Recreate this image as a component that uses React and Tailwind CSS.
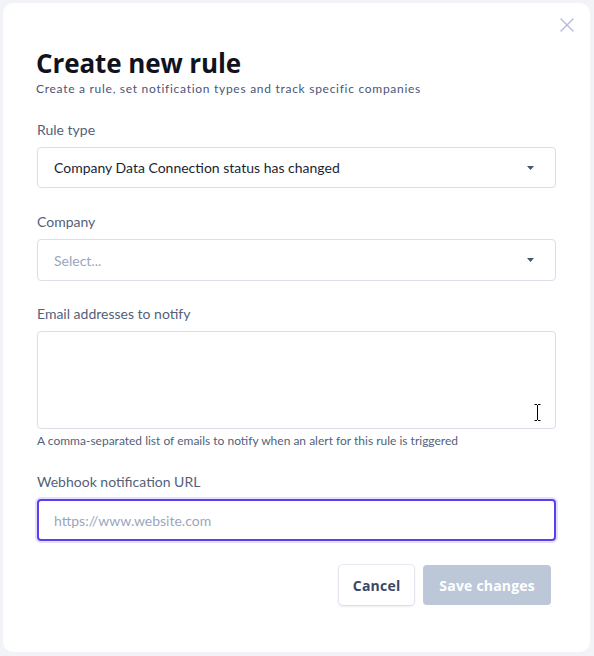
import { X } from 'lucide-react'

function Caret() {
  return (
    <svg width="7" height="4" viewBox="0 0 7 4" className="flex-shrink-0">
      <path d="M0 0h7L3.5 4z" fill="#4a5470" />
    </svg>
  )
}

function Label({ children }) {
  return <p className="text-[14px] leading-5 text-[#545f7a]">{children}</p>
}

const heading = { fontFamily: '"Open Sans", "Noto Sans", sans-serif' }

export default function App() {
  return (
    <div className="min-h-screen bg-[#f2f3f7] pt-[3px] pl-[3px]" style={{ fontFamily: 'Lato, "Noto Sans", sans-serif' }}>
      <div className="relative w-[587px] h-[649px] rounded-[10px] bg-white pl-[34px] pr-[34px] pt-[44px]">
        <button className="absolute top-[10px] right-[11px] text-[#b5bad9]">
          <X size={24} strokeWidth={1.4} />
        </button>

        <h1 className="text-[26px] leading-8 font-bold text-[#101220] tracking-[-0.1px] -ml-[1px]" style={heading}>Create new rule</h1>
        <p className="text-[12px] leading-4 text-[#4a5578] mt-[2px] tracking-[0.72px] -ml-[1px]">
          Create a rule, set notification types and track specific companies
        </p>

        <div className="mt-[23px] flex flex-col gap-[7px]">
          <Label>Rule type</Label>
          <div className="h-[41px] rounded-[4px] border border-[#d9dee8] flex items-center justify-between pl-[16px] pr-[21px]">
            <span className="text-[14px] text-[#1b1f33]">Company Data Connection status has changed</span>
            <Caret />
          </div>
        </div>

        <div className="mt-[24px] flex flex-col gap-[7px]">
          <Label>Company</Label>
          <div className="h-[42px] rounded-[4px] border border-[#d9dee8] flex items-center justify-between pl-[16px] pr-[21px]">
            <span className="text-[14px] text-[#9ba6bd]">Select...</span>
            <Caret />
          </div>
        </div>

        <div className="mt-[23px] flex flex-col gap-[7px]">
          <Label>Email addresses to notify</Label>
          <div className="relative h-[98px] rounded-[4px] border border-[#d9dee8]">
            <svg width="7" height="17" viewBox="0 0 7 17" className="absolute right-[14px] bottom-[7px]">
              <path d="M0.5 0.5h2.5M4 0.5h2.5M3.5 1v15M0.5 16.5h2.5M4 16.5h2.5" stroke="#000" strokeWidth="1" fill="none" />
            </svg>
          </div>
          <p className="-mt-[3px] text-[12px] leading-4 text-[#545f7a]">
            A comma-separated list of emails to notify when an alert for this rule is triggered
          </p>
        </div>

        <div className="mt-[23px] flex flex-col gap-[7px]">
          <Label>Webhook notification URL</Label>
          <div className="h-[42px] rounded-[4px] border-2 border-[#5a3ef0] shadow-[0_0_0_2px_#e4e0fd] flex items-center pl-[15px]">
            <span className="text-[14px] text-[#9ba6bd]">https://www.website.com</span>
          </div>
        </div>

        <div className="mt-[24px] flex justify-end gap-[9px] pr-[5px]" style={heading}>
          <button className="h-[40px] px-[14px] rounded-[4px] bg-white text-[14px] font-bold text-[#3d4763] shadow-[0_1px_3px_rgba(60,70,120,0.18),0_0_0_1px_#eef0f6] tracking-[0.2px]">
            Cancel
          </button>
          <button className="h-[40px] px-[16px] rounded-[4px] bg-[#bcc7d8] text-[14px] font-bold text-white tracking-[0.2px]">
            Save changes
          </button>
        </div>
      </div>
    </div>
  )
}
